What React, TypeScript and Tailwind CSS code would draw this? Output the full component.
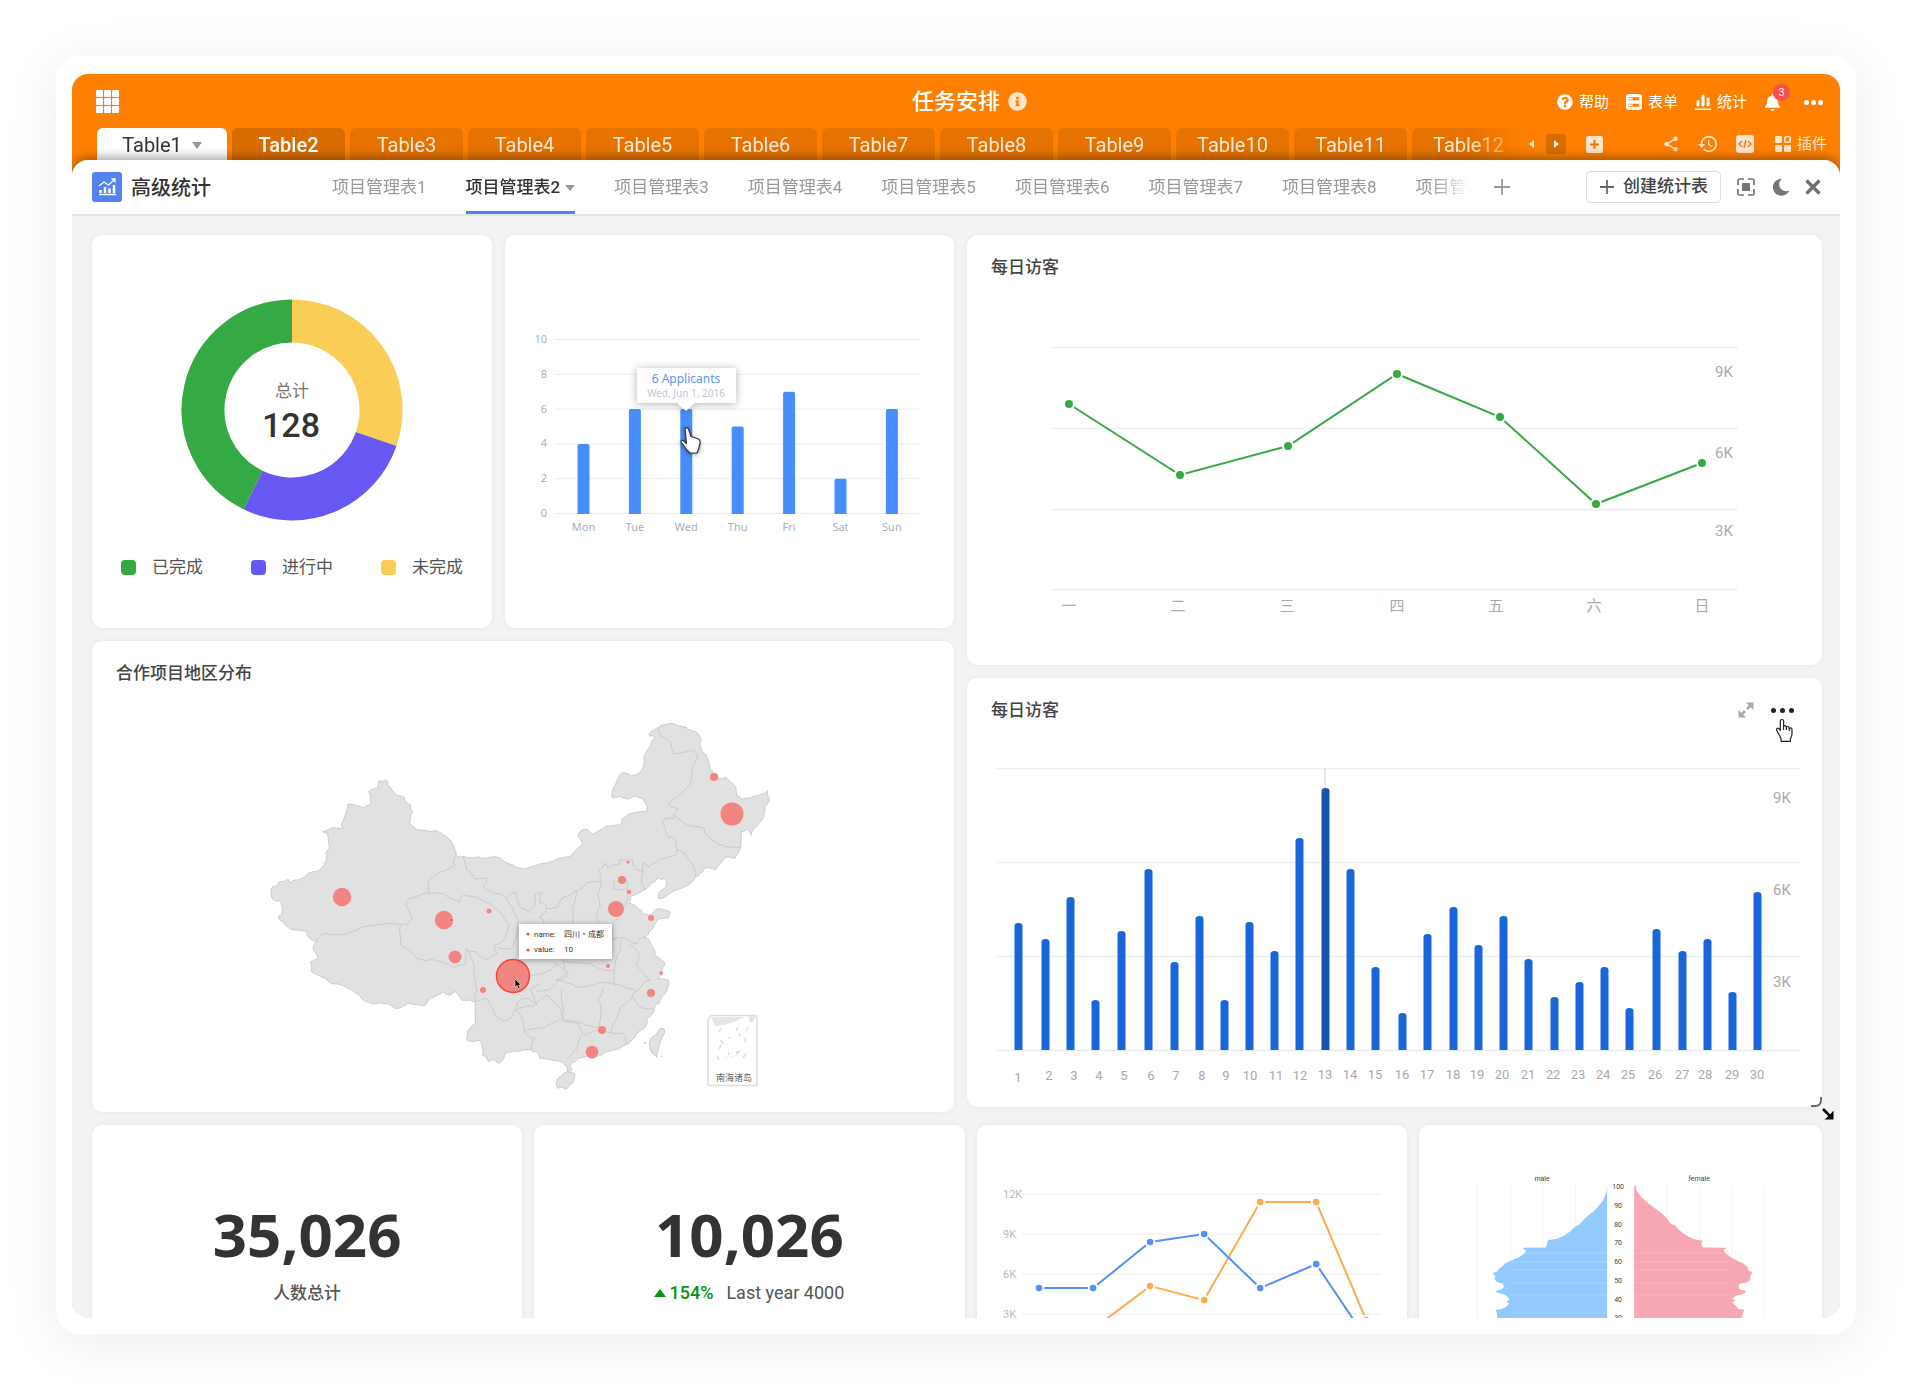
import type { ReactNode } from "react";
import { FaBell, FaInfoCircle, FaQuestionCircle, FaMoon } from "react-icons/fa";
import { MdHistory, MdShare } from "react-icons/md";

const sheets = Array.from({ length: 12 }, (_, i) => `Table${i + 1}`);
const boards = Array.from({ length: 9 }, (_, i) => `项目管理表${i + 1}`);

type Point = [number, number];

const toPoints = (text: string): Point[] =>
    text.trim().split(/\s+/).map((pair) => pair.split(",").map(Number) as Point);

// breaks every long segment up and nudges the new points, so that borders look surveyed
function roughen(text: string, closed = false) {
    const points = toPoints(text);
    if (closed) points.push(points[0]);
    const out: Point[] = [points[0]];
    for (let i = 1; i < points.length; i++) {
        const [x0, y0] = points[i - 1];
        const [x1, y1] = points[i];
        const length = Math.hypot(x1 - x0, y1 - y0);
        const steps = Math.max(1, Math.round(length / 8));
        for (let s = 1; s < steps; s++) {
            const t = s / steps;
            const wave = Math.sin(x0 * 12.9 + y1 * 78.2 + s * 37.7) * 4;
            out.push([
                Math.round(x0 + (x1 - x0) * t - ((y1 - y0) / length) * wave),
                Math.round(y0 + (y1 - y0) * t + ((x1 - x0) / length) * wave),
            ]);
        }
        out.push([x1, y1]);
    }
    return "M" + out.map((p) => p.join(",")).join(" ") + (closed ? "Z" : "");
}

const mainland =
    "88,605 92,590 110,575 135,568 140,578 160,570 185,556 215,545 238,518 240,490 250,478 245,430 232,425 262,412 290,413 285,400 302,343 345,354 362,346 360,305 388,295 390,272 410,270 412,285 425,300 440,316 460,322 478,345 484,365 478,405 490,414 545,422 570,435 588,450 605,497 628,498 665,500 700,502 735,508 765,525 803,535 845,520 885,508 925,500 960,463 948,442 952,425 975,420 990,432 1025,408 1060,405 1070,390 1100,370 1138,366 1140,350 1125,325 1105,318 1090,327 1065,320 1045,324 1043,310 1068,250 1095,258 1125,240 1130,205 1150,168 1162,143 1147,138 1150,125 1172,112 1215,102 1250,112 1275,125 1290,155 1300,190 1315,235 1326,262 1360,262 1388,290 1390,318 1400,325 1440,318 1478,302 1482,325 1468,350 1462,390 1445,410 1432,436 1420,418 1402,425 1400,478 1385,505 1368,500 1350,515 1330,540 1300,535 1275,560 1245,590 1215,602 1190,620 1172,625 1180,600 1195,580 1190,565 1170,562 1150,580 1130,600 1095,618 1090,640 1112,652 1125,660 1130,672 1150,675 1165,658 1205,668 1200,685 1170,690 1160,705 1145,725 1130,742 1148,755 1162,785 1165,800 1190,825 1182,848 1168,866 1200,870 1198,890 1185,915 1175,940 1160,955 1140,985 1135,1010 1110,1030 1080,1065 1060,1078 1020,1088 985,1100 945,1108 925,1120 930,1140 915,1145 910,1125 880,1112 840,1105 830,1085 815,1080 780,1085 740,1092 725,1120 712,1108 695,1115 678,1095 670,1050 635,1050 637,1030 660,1000 658,935 645,930 620,930 605,905 590,915 570,905 545,920 520,945 470,938 435,955 420,945 380,942 340,925 300,895 262,882 240,865 200,845 198,815 218,805 205,780 212,758 195,745 188,725 150,720 120,695 108,678 118,665 112,632 95,630";

const islands = [
    "890,1165 905,1150 938,1152 935,1170 910,1198 890,1195 885,1178",
    "1188,1017 1186,1035 1168,1102 1160,1095 1148,1068 1155,1040 1172,1020",
];

const borders = [
    "605,497 600,525 565,545 527,575 528,610 465,635 485,685 468,705 450,705",
    "212,758 240,730 300,730 340,712 400,703 450,705 455,770 490,800 530,810 570,818 600,835 630,825 632,775",
    "528,610 570,612 615,635 625,617 660,622 690,638 735,675 755,705 745,740 712,765 720,790 690,808 660,785 632,775",
    "625,500 635,540 655,565 690,562 680,590 715,610 745,625 775,608 788,655 808,668 825,650 825,615 845,608 842,640 858,655 890,650 910,620 935,605 970,580 1010,575",
    "745,625 765,650 780,690 778,720 760,775 720,770",
    "858,655 838,680 850,700 880,702",
    "940,603 930,650 928,705",
    "1010,575 1000,610 1008,650 1000,690 1012,705",
    "1010,575 1005,540 1020,520 1030,535 1062,525 1065,508 1100,508 1110,540 1130,545 1125,575 1135,598",
    "1045,580 1060,560 1085,572 1090,600 1070,600 1045,598 1045,580",
    "1130,545 1130,515 1145,530 1180,505 1225,490 1222,455 1200,440 1185,390 1215,385 1228,355 1200,340 1245,300 1262,280 1265,240 1282,205 1268,180 1215,192 1205,158 1180,140 1172,115",
    "1215,375 1260,408 1300,415 1315,440 1350,465 1402,470",
    "1225,480 1245,490 1265,520 1275,560",
    "1085,610 1075,660 1050,690 1045,750 1080,745 1110,762 1130,742",
    "1065,755 1060,790 1050,830 1050,885 1080,895 1110,905 1130,878 1150,870 1110,820 1115,790 1090,765",
    "632,775 655,830 665,900 660,935 690,925 710,965 735,990 755,985 775,940 800,925 830,945 812,900 840,880",
    "815,855 860,845 885,820 920,850 890,870 865,900 830,905",
    "905,808 915,850 885,870 940,890 1000,880 1050,885",
    "900,812 980,820 1010,835 1050,840",
    "900,900 905,950 905,990 960,1000 1005,1010 1010,960 1002,930 1015,895",
    "775,960 820,950 860,915 890,945 900,990 850,1015 795,1025 790,985 775,960",
    "795,1025 825,1045 815,1080",
    "905,995 945,1000 960,1030 945,1070 915,1105",
    "1110,905 1100,920 1070,945 1055,985 1040,1030 1005,1020 960,1040",
    "1100,920 1120,950 1155,955",
    "1040,1030 1070,1030 1080,1065",
];

// x, y, radius
const bubbles = [
    [250, 256, 9.2], [352, 279, 9.2], [397, 270, 2.5], [363, 316, 6.5], [391, 349, 3],
    [524, 268, 8], [530, 239, 4], [537, 251, 2.3], [536, 221, 1.6], [559, 277, 3],
    [516, 325, 2], [569, 332, 1.8], [559, 352, 4], [510, 389, 4], [500, 411, 6.3],
    [622, 136, 4], [640, 173, 11.5],
];

const visits = [
    [51, 245], [78, 261], [103, 219], [128, 322], [154, 253], [181, 191], [207, 284], [232, 238], [257, 322], [282, 244],
    [307, 273], [332, 160], [358, 110], [383, 191], [408, 289], [435, 335], [460, 256], [486, 229], [511, 267], [536, 238],
    [561, 281], [587, 319], [612, 304], [637, 289], [662, 330], [689, 251], [715, 273], [740, 261], [765, 314], [790, 214],
];
const dayLabels = [
    51, 82, 107, 132, 157, 184, 209, 235, 259, 283, 309, 333, 358, 383, 408, 435, 460, 486, 510, 535,
    561, 586, 611, 636, 661, 688, 715, 738, 765, 790,
];

const weekLine: Point[] = [[102, 169], [213, 240], [321, 211], [430, 139], [533, 182], [629, 269], [735, 228]];
const blueLine: Point[] = [[62, 163], [116, 163], [173, 117], [227, 109], [283, 163], [339, 139], [388, 212]];
const orangeLine: Point[] = [[62, 222], [116, 204], [173, 161], [227, 175], [283, 77], [339, 77], [389, 195]];

const male =
    "621,287 620,300 616,315 608,332 598,345 585,360 560,380 548,392 540,402 525,410 510,424 490,438 470,447 445,450 442,456 440,466 437,472 369,473 371,478 378,481 373,490 355,502 330,513 315,520 305,530 295,538 291,545 279,547 281,553 286,558 284,568 290,576 308,581 312,590 305,598 288,602 290,607 315,614 325,622 328,630 318,634 327,640 318,650 305,657 286,659 290,667 293,690 270,740 621,740";
const female =
    "702,287 710,288 706,293 710,303 720,317 735,332 755,348 780,366 800,384 812,402 825,406 835,418 850,430 865,440 885,448 908,452 903,460 908,472 980,473 970,480 975,488 990,500 1015,514 1030,520 1043,532 1045,542 1058,547 1052,553 1048,572 1040,577 1020,580 1014,588 1020,598 1038,602 1033,610 1010,616 996,625 1005,632 996,638 1008,648 1012,656 1032,659 1028,670 1022,690 1040,740 702,740";

function Card({ title, actions, children }: { title?: string; actions?: ReactNode; children: ReactNode }) {
    return (
        <section className="relative min-w-0 rounded-[10px] bg-white shadow-[0_0_5px_rgba(0,0,0,0.06)]">
            {title && (
                <header className="flex items-center justify-between pt-5 pr-7 pb-px pl-6">
                    <h2 className="text-[17px] leading-6 font-medium text-[#444]">{title}</h2>
                    {actions}
                </header>
            )}
            {children}
        </section>
    );
}

function Series({ points, color, radius = 4 }: { points: Point[]; color: string; radius?: number }) {
    return (
        <g>
            <polyline points={points.join(" ")} fill="none" stroke={color} strokeWidth="2" />
            {points.map(([x, y]) => (
                <circle key={x} cx={x} cy={y} r={radius} fill={color} stroke="#fff" strokeWidth="4" paintOrder="stroke" />
            ))}
        </g>
    );
}

function Donut() {
    const arc = (from: number, to: number, color: string) => {
        const at = (deg: number) => {
            const a = ((deg - 90) * Math.PI) / 180;
            return `${111 + 89 * Math.cos(a)} ${111 + 89 * Math.sin(a)}`;
        };
        return <path d={`M${at(from)}A89 89 0 0 1 ${at(to)}`} fill="none" stroke={color} strokeWidth="43" />;
    };
    return (
        <svg viewBox="0 0 222 222" className="w-[222px]">
            {arc(0, 109, "#facd57")}
            {arc(109, 206, "#6758f3")}
            {arc(206, 360, "#35a943")}
            <text x="111" y="98" textAnchor="middle" className="fill-[#777] text-[17px]">总计</text>
            <text x="110" y="138" textAnchor="middle" className="fill-[#333] text-[34px] font-medium">128</text>
        </svg>
    );
}

function Applicants() {
    const days = ["Mon", "Tue", "Wed", "Thu", "Fri", "Sat", "Sun"];
    const counts = [4, 6, 6, 5, 7, 2, 6];
    return (
        <svg viewBox="0 0 449 393" className="block w-full font-['Noto_Sans',sans-serif] text-[11px]">
            {[0, 2, 4, 6, 8, 10].map((v) => (
                <g key={v}>
                    <line x1="49" x2="416" y1={278.5 - v * 17.4} y2={278.5 - v * 17.4} stroke="#e6eff7" />
                    <text x="42" y={282 - v * 17.4} textAnchor="end" className="fill-[#a9b0b8]">{v}</text>
                </g>
            ))}
            {counts.map((v, i) => {
                const x = 78.5 + i * 51.4;
                const y = 278.5 - v * 17.4;
                return (
                    <g key={i}>
                        <path d={`M${x - 6} 279V${y + 2}q0 -2 2 -2h8q2 0 2 2V279z`} fill="#478dfc" />
                        <text x={x} y="296" textAnchor="middle" className="fill-[#a9b0b8]">{days[i]}</text>
                    </g>
                );
            })}
            <path d="M132 133h99v35h-41l-9 8-9-8h-40z" fill="#fff" className="drop-shadow-[0_1px_4px_rgba(0,0,0,0.3)]" />
            <text x="181" y="148" textAnchor="middle" className="fill-[#5b97ee] text-[12px]">6 Applicants</text>
            <text x="181" y="162" textAnchor="middle" className="fill-[#bcc8d8] text-[10px]">Wed, Jun 1, 2016</text>
            <path
                d="M180 193.500q2-2 3.500.5l2.500 7.500 7.500 2.500q2 1 1.500 4.500l-1.500 6-1.500 3.500h-7l-2.500-2.500-6.500-8.500q0-2 2-1.500l3.500 3z"
                fill="#fff" stroke="#333" strokeWidth="1.200" strokeLinejoin="round"
                className="drop-shadow-[0_1px_2px_rgba(0,0,0,0.4)]"
            />
        </svg>
    );
}

function WeekVisitors() {
    const labels = ["一", "二", "三", "四", "五", "六", "日"];
    const at = [102, 211, 320, 430, 529, 627, 735];
    return (
        <svg viewBox="0 45 855 385" className="block w-full text-[15px]">
            {[113, 194, 275, 355].map((y) => (
                <line key={y} x1="84" x2="771" y1={y - 0.5} y2={y - 0.5} stroke="#eceff4" strokeWidth="1.500" />
            ))}
            <Series points={weekLine} color="#35a943" />
            {labels.map((label, i) => (
                <text key={label} x={at[i]} y="376" textAnchor="middle" className="fill-[#aaa]">{label}</text>
            ))}
            <g className="fill-[#aaa]">
                <text x="748" y="142">9K</text>
                <text x="748" y="223">6K</text>
                <text x="748" y="301">3K</text>
            </g>
        </svg>
    );
}

function MonthVisitors() {
    return (
        <svg viewBox="0 45 855 384" className="block w-full text-[13px]">
            {[90, 184, 278, 372].map((y) => (
                <line key={y} x1="29" x2="833" y1={y + 0.5} y2={y + 0.5} stroke="#eceff4" strokeWidth="1.500" />
            ))}
            <line x1="358" x2="358" y1="90" y2="112" stroke="#e2e6ee" strokeWidth="2" />
            {visits.map(([x, y], i) => (
                <path
                    key={x}
                    d={`M${x - 3.5} 372V${y + 3}q0 -3 4 -3t4 3V372z`}
                    fill={i === 12 ? "#1753ad" : "#1966db"}
                />
            ))}
            {dayLabels.map((x, i) => (
                <text key={x} x={x} y={i === 0 ? 404 : i < 12 ? 402 : 401} textAnchor="middle" className="fill-[#aaa]">
                    {i + 1}
                </text>
            ))}
            <g className="fill-[#aaa] text-[15px]">
                <text x="806" y="125">9K</text>
                <text x="806" y="217">6K</text>
                <text x="806" y="309">3K</text>
            </g>
        </svg>
    );
}

function RegionMap() {
    return (
        <svg viewBox="0 45 862 426" className="block w-full">
            <g transform="translate(148 49) scale(0.35714 0.33333)" fill="#e1e1e1" stroke="#c6c6c6" strokeWidth="2.500" strokeLinejoin="round">
                <path d={roughen(mainland, true)} />
                {islands.map((d) => <path key={d} d={roughen(d, true)} />)}
                <g fill="none">
                    {borders.map((d) => <path key={d} d={roughen(d)} />)}
                </g>
                <circle cx="1134" cy="1059" r="2" />
                <circle cx="1181" cy="1100" r="1" />
            </g>
            {bubbles.map(([x, y, r]) => (
                <circle key={`${x}-${y}`} cx={x} cy={y} r={r} fill="#f08582" stroke="#ecdcdc" strokeWidth="1.500" paintOrder="stroke" />
            ))}
            <circle cx="359" cy="279" r="2" fill="#ef5350" stroke="#f6a5a3" />
            <circle cx="421" cy="335" r="16.500" fill="#f08582" stroke="#f4453c" strokeWidth="1.500" />
            <path d="M423 338v8l2-1.500 1.500 3 1.500-1-1.500-2.500h2.500z" fill="#000" stroke="#fff" strokeWidth="0.500" />

            <rect x="427" y="283" width="93" height="35" fill="#fff" className="drop-shadow-[0_1px_3px_rgba(0,0,0,0.35)]" />
            <g className="fill-[#333] text-[8px]">
                <circle cx="436" cy="293" r="1.500" fill="#f4453c" />
                <text x="442" y="296">name:</text>
                <text x="472" y="296" className="font-['Noto_Sans_CJK_SC',sans-serif]">四川·成都</text>
                <circle cx="436" cy="309" r="1.500" fill="#f4453c" />
                <text x="442" y="311">value:</text>
                <text x="472" y="311">10</text>
            </g>

            <path d="M619 374.500h44q2 0 2 2v66q0 2-2 2h-45q-2 0-2-2v-64z" fill="#fff" stroke="#ddd" strokeWidth="1.500" />
            <path d="M619 376h33l-10 5-11 3-8 1zM656 375h8l-3 6h-3z" fill="#e6e6e6" />
            <path
                d="m629 387-2 4 m19-5-2 4 m-15 9 2 4 m6-7 1 2 m9-6 1 3 m6-5 2-4 m-3 11v4 m-5 8-3 4 m-16-9-2 4 m9 3 1 3 m8-4v3 m-20 2 2 4 m7-3v1 m5-2v1 m5-2v1 m10-3-3 5 m7-37 2-4"
                stroke="#ddd" strokeWidth="1.500" fill="none"
            />
            <text x="642" y="440" textAnchor="middle" className="fill-[#666] text-[9px]">南海诸岛</text>
        </svg>
    );
}

function TrendChart() {
    return (
        <svg viewBox="0 0 430 260" className="block w-full text-[11px]">
            {["12K", "9K", "6K", "3K"].map((label, i) => (
                <g key={label}>
                    <line x1="45" x2="403" y1={69 + i * 40} y2={69 + i * 40} stroke="#f6f6f8" strokeWidth="2" />
                    <text x="26" y={73 + i * 40} className="fill-[#bbb]">{label}</text>
                </g>
            ))}
            <Series points={orangeLine} color="#fcab50" radius={3.3} />
            <Series points={blueLine} color="#5192f5" radius={3.3} />
        </svg>
    );
}

function Pyramid() {
    return (
        <svg viewBox="0 0 403 244" className="block w-full text-[7px]">
            {[58, 91, 123, 156, 247, 280, 312, 344].map((x) => (
                <line key={x} x1={x + 0.5} x2={x + 0.5} y1="60" y2="244" stroke="#f3f3f3" />
            ))}
            <g transform="translate(-19 -35) scale(0.33333)">
                <polygon points={male} fill="#92c9fe" />
                <polygon points={female} fill="#f7a6b3" />
            </g>
            {[128, 137, 145, 158, 170, 188].map((y) => (
                <path key={y} d={`M92 ${y}H188M215 ${y}h98`} stroke="#fff" strokeOpacity="0.2" />
            ))}
            <g className="fill-[#444]" textAnchor="middle">
                <text x="123" y="56">male</text>
                <text x="280" y="56">female</text>
                {[100, 90, 80, 70, 60, 50, 40, 30].map((age, i) => (
                    <text key={age} x="199" y={Math.round(64 + i * 18.75)}>{age}</text>
                ))}
            </g>
        </svg>
    );
}

function TopBar() {
    return (
        <div className="flex h-[54px] items-center px-[17px] text-white">
            <div className="flex-1">
                <button aria-label="应用" className="ml-[7px] grid grid-cols-3 gap-px">
                    {Array.from({ length: 9 }, (_, i) => <i key={i} className="h-[7px] w-[7px] rounded-[1px] bg-white" />)}
                </button>
            </div>
            <h1 className="relative pt-px text-[22px] leading-8 font-medium">
                任务安排
                <FaInfoCircle size={19} className="absolute top-[7px] left-full ml-2 opacity-80" />
            </h1>
            <div className="flex flex-1 items-center justify-end gap-[17px] pt-[2px] text-[15px] leading-6">
                <button className="flex items-center gap-[6px]">
                    <FaQuestionCircle size={16} />帮助
                </button>
                <button className="flex items-center gap-[6px]">
                    <svg viewBox="0 0 16 16" className="w-4">
                        <rect width="16" height="16" rx="3" fill="#fff" />
                        <path d="M2 3.200h12v3H2zM2 9.800h12v3H2z" fill="#ff8000" />
                        <path d="M2 4.700h4.500M2 11.300h4.500M14 3v3.500M14 9.500V13" stroke="#fff" strokeWidth="1.500" />
                    </svg>
                    表单
                </button>
                <button className="flex items-center gap-[6px]">
                    <svg viewBox="0 0 16 16" className="w-4">
                        <path d="M3 7.500V11M8 2v9M13 5v6" stroke="#fff" strokeWidth="3" strokeLinecap="round" />
                        <path d="M0 15.200h16" stroke="#fff" strokeWidth="1.500" />
                    </svg>
                    统计
                </button>
                <button aria-label="通知" className="relative">
                    <FaBell size={17} />
                    <span className="absolute -top-[10px] -right-[9px] h-[17px] w-[17px] rounded-full bg-[#f4504c] text-center text-[11px] leading-[17px]">3</span>
                </button>
                <button aria-label="更多" className="ml-[6px] flex gap-[2px]">
                    {[0, 1, 2].map((i) => <i key={i} className="h-[5px] w-[5px] rounded-full bg-white" />)}
                </button>
            </div>
        </div>
    );
}

function SheetTabs() {
    return (
        <div className="flex h-8 items-center pr-[13px] pl-[25px] text-xl">
            <nav className="flex min-w-0 gap-[5px] mask-[linear-gradient(to_right,#000_1370px,transparent_1430px)]">
                {sheets.map((name, i) =>
                    i === 0 ? (
                        <button key={name} className="flex h-8 w-[130px] shrink-0 items-center justify-center gap-[10px] rounded-t-md bg-white pt-[2px] text-[#333]">
                            {name}
                            <i className="border-x-[5px] border-t-[7px] border-x-transparent border-t-[#999]" />
                        </button>
                    ) : (
                        <button
                            key={name}
                            className={
                                i === 1
                                    ? "h-8 w-[113px] shrink-0 rounded-t-md bg-[#d96c00] pt-[2px] font-medium text-white"
                                    : "h-8 w-[113px] shrink-0 rounded-t-md bg-[#e67300] pt-[2px] text-white/85"
                            }
                        >
                            {name}
                        </button>
                    )
                )}
            </nav>
            <div className="ml-1 flex items-center gap-3">
                <button aria-label="向左" className="border-y-[4px] border-r-[5px] border-y-transparent border-r-white/90" />
                <button aria-label="向右" className="flex h-5 w-5 items-center justify-center rounded-[3px] bg-[#d96c00]">
                    <i className="border-y-[4px] border-l-[5px] border-y-transparent border-l-white/90" />
                </button>
                <button aria-label="添加数据表" className="ml-2">
                    <svg viewBox="0 0 17 17" className="w-[17px]">
                        <rect width="17" height="17" rx="2.500" fill="#ffe6cc" />
                        <path d="M8.500 4v9M4 8.500h9" stroke="#ef7a05" strokeWidth="2" />
                    </svg>
                </button>
            </div>
            <div className="ml-auto flex items-center gap-[17px] text-[15px] text-[#ffe6cc]">
                <button aria-label="分享"><MdShare size={18} /></button>
                <button aria-label="历史"><MdHistory size={22} /></button>
                <button aria-label="代码">
                    <svg viewBox="0 0 18 18" className="w-[18px]">
                        <rect width="18" height="18" rx="3" fill="#ffe6cc" />
                        <path d="m6 6-3 3 3 3M12 6l3 3-3 3M10 5l-2 8" fill="none" stroke="#ef7a05" strokeWidth="1.400" />
                    </svg>
                </button>
                <button className="ml-1 flex items-center gap-[6px]">
                    <svg viewBox="0 0 16 16" className="w-4" fill="#ffe6cc">
                        <rect width="7" height="7" rx="1" />
                        <rect y="9" width="7" height="7" rx="1" />
                        <rect x="9" y="9" width="7" height="7" rx="1" />
                        <rect x="9.800" y="0.800" width="5.400" height="5.400" rx="1" fill="none" stroke="#ffe6cc" strokeWidth="1.600" />
                    </svg>
                    插件
                </button>
            </div>
        </div>
    );
}

function BoardBar() {
    return (
        <div className="flex h-14 items-stretch border-b-2 border-[#e6e6e6] pr-[19px] pl-5">
            <div className="flex w-60 shrink-0 items-center gap-[9px]">
                <svg viewBox="0 0 30 30" className="w-[30px]">
                    <rect width="30" height="30" rx="3" fill="#5581f1" />
                    <path d="M7 22.500h17" stroke="#fff" strokeWidth="1.500" />
                    <path d="M8.500 18v3M13 15v6M17.500 16.500v4.500M22 13v8" stroke="#fff" strokeWidth="2.500" />
                    <path d="m7 14 5-4 4.500 3 6-5.500M19.500 7h3.500v3.500" stroke="#fff" strokeWidth="1.300" fill="none" />
                </svg>
                <h2 className="pt-[2px] text-xl leading-7 font-medium text-[#333]">高级统计</h2>
            </div>
            <nav className="flex min-w-0 gap-[39px] overflow-hidden text-[17px] text-[#999] mask-[linear-gradient(to_right,#000_1100px,transparent_1138px)]">
                {boards.map((name, i) =>
                    i === 1 ? (
                        <button key={name} className="flex shrink-0 items-center gap-[5px] border-b-[3px] border-[#4f82f5] pt-[5px] font-medium text-[#333]">
                            {name}
                            <i className="border-x-[5px] border-t-[6px] border-x-transparent border-t-[#999]" />
                        </button>
                    ) : (
                        <button key={name} className="shrink-0 pt-[2px]">{name}</button>
                    )
                )}
            </nav>
            <div className="ml-auto flex shrink-0 items-center">
                <button aria-label="添加" className="mr-[76px]">
                    <svg viewBox="0 0 16 16" className="w-4"><path d="M8 0v16M0 8h16" stroke="#999" strokeWidth="1.800" /></svg>
                </button>
                <button className="mr-4 flex h-8 items-center gap-2 rounded-sm border border-[#ddd] px-3 text-[17px] font-medium text-[#444]">
                    <svg viewBox="0 0 16 16" className="w-4"><path d="M8 1v14M1 8h14" stroke="#666" strokeWidth="1.800" /></svg>
                    创建统计表
                </button>
                <button aria-label="全屏" className="mr-[17px]">
                    <svg viewBox="0 0 18 18" className="w-[18px]">
                        <path d="M1 7V2.500q0-1.500 1.500-1.500H7M11 1h4.500Q17 1 17 2.500V7M17 11v4.500q0 1.500-1.500 1.500H11M7 17H2.500Q1 17 1 15.500V11" stroke="#757575" strokeWidth="1.700" fill="none" />
                        <rect x="5" y="5" width="8" height="8" rx="1" fill="#757575" />
                    </svg>
                </button>
                <button aria-label="夜间模式" className="mr-4">
                    <FaMoon size={17} className="-rotate-12 text-[#757575]" />
                </button>
                <button aria-label="关闭">
                    <svg viewBox="0 0 16 16" className="w-4"><path d="m1.500 1.500 13 13M14.500 1.500l-13 13" stroke="#6f6f6f" strokeWidth="3.200" /></svg>
                </button>
            </div>
        </div>
    );
}

export default function App() {
    const legend = [
        { label: "已完成", dot: "bg-[#35a943]" },
        { label: "进行中", dot: "bg-[#6758f3]" },
        { label: "未完成", dot: "bg-[#facd57]" },
    ];

    return (
        <div className="h-screen bg-white p-14 font-['Roboto','Noto_Sans_CJK_SC',sans-serif]">
            <div className="h-full rounded-3xl bg-white px-4 pt-[18px] pb-4 shadow-[0_8px_56px_rgba(0,0,0,0.08)]">
                <div className="flex h-full flex-col overflow-hidden rounded-2xl bg-[#f3f3f3]">
                    <div className="-mb-4 shrink-0 bg-[#ff8000] pb-4">
                        <TopBar />
                        <SheetTabs />
                    </div>
                    <main className="relative min-h-0 flex-1 rounded-t-2xl bg-[#f3f3f3] shadow-[0_-2px_12px_rgba(0,0,0,0.4)]">
                        <div className="rounded-t-2xl bg-white">
                            <BoardBar />
                        </div>
                        <div className="flex flex-col gap-[13px] pt-[19px] pr-[18px] pl-5">
                            <div className="grid grid-cols-[862fr_855fr] items-start gap-[13px]">
                                <div className="grid gap-[13px]">
                                    <div className="grid grid-cols-[400fr_449fr] gap-[13px]">
                                        <Card>
                                            <div className="flex flex-col items-center pt-16">
                                                <Donut />
                                                <ul className="mt-[34px] flex gap-12 text-[17px] leading-6 text-[#555]">
                                                    {legend.map(({ label, dot }) => (
                                                        <li key={label} className="flex items-center gap-4">
                                                            <i className={`h-[15px] w-[15px] rounded-sm ${dot}`} />
                                                            {label}
                                                        </li>
                                                    ))}
                                                </ul>
                                            </div>
                                        </Card>
                                        <Card><Applicants /></Card>
                                    </div>
                                    <Card title="合作项目地区分布"><RegionMap /></Card>
                                </div>
                                <div className="grid gap-[13px]">
                                    <Card title="每日访客"><WeekVisitors /></Card>
                                    <Card
                                        title="每日访客"
                                        actions={
                                            <div className="relative flex items-center gap-[17px]">
                                                <button aria-label="展开">
                                                    <svg viewBox="0 0 16 16" className="w-4">
                                                        <path d="M9 7l4-4M7 9l-4 4" stroke="#aaa" strokeWidth="2.600" />
                                                        <path d="M8 .500h7.500V8zM.500 8v7.500H8z" fill="#aaa" />
                                                    </svg>
                                                </button>
                                                <button aria-label="更多" className="flex gap-1">
                                                    {[0, 1, 2].map((i) => <i key={i} className="h-[5px] w-[5px] rounded-full bg-[#222]" />)}
                                                </button>
                                                <svg viewBox="0 0 18 25" className="absolute top-4 right-0 w-[18px]">
                                                    <path
                                                        d="M6 1.500c-1 0-1.700.8-1.700 1.800v9.200l-1.200-1.600c-.6-.8-1.600-.9-2.200-.3-.5.500-.5 1.200-.1 1.900l3.400 6.200c.5 1 .9 1.600.9 2.600v2h9.300v-2c0-1 1.600-2.800 1.600-5.300v-4.500c0-1-.6-1.700-1.400-1.700s-1.300.5-1.400 1.300v-1c0-1-.7-1.600-1.500-1.600s-1.400.6-1.400 1.400v-.7c0-1-.7-1.600-1.500-1.600-.7 0-1.200.5-1.200 1.200V3.300c0-1-.6-1.800-1.500-1.800zM7.500 8v4M10.400 9v3M13.300 10v3"
                                                        fill="#fff" stroke="#222" strokeWidth="1.200" strokeLinejoin="round"
                                                    />
                                                </svg>
                                            </div>
                                        }
                                    >
                                        <MonthVisitors />
                                        <svg viewBox="0 0 26 26" className="absolute -right-[14px] -bottom-[15px] w-[26px]">
                                            <path d="M11 1v3q0 6-6 6H1" fill="none" stroke="#666" strokeWidth="1.800" />
                                            <path d="m13 13 9 9" stroke="#fff" strokeWidth="4.500" />
                                            <path d="m13 13 8 8" stroke="#000" strokeWidth="2.600" />
                                            <path d="M23.500 14.500v9h-9l3-2.500 3.500-3.500z" fill="#000" />
                                        </svg>
                                    </Card>
                                </div>
                            </div>
                            <div className="grid grid-cols-[430fr_430fr_430fr_403fr] gap-3">
                                <Card>
                                    <div className="flex flex-col items-center pt-[76px]">
                                        <strong className="font-['Noto_Sans',sans-serif] text-6xl leading-[66px] font-bold text-[#333]">35,026</strong>
                                        <p className="mt-[14px] text-[17px] leading-6 font-medium text-[#555]">人数总计</p>
                                    </div>
                                </Card>
                                <Card>
                                    <div className="flex flex-col items-center pt-[76px]">
                                        <strong className="font-['Noto_Sans',sans-serif] text-6xl leading-[66px] font-bold text-[#333]">10,026</strong>
                                        <p className="mt-[14px] flex items-center text-lg leading-6 text-[#555]">
                                            <i className="mr-[3px] border-x-[6px] border-b-[8px] border-x-transparent border-b-[#0a920f]" />
                                            <span className="mr-[13px] font-medium text-[#0a920f]">154%</span>
                                            Last year 4000
                                        </p>
                                    </div>
                                </Card>
                                <Card><TrendChart /></Card>
                                <Card><Pyramid /></Card>
                            </div>
                        </div>
                    </main>
                </div>
            </div>
        </div>
    );
}
